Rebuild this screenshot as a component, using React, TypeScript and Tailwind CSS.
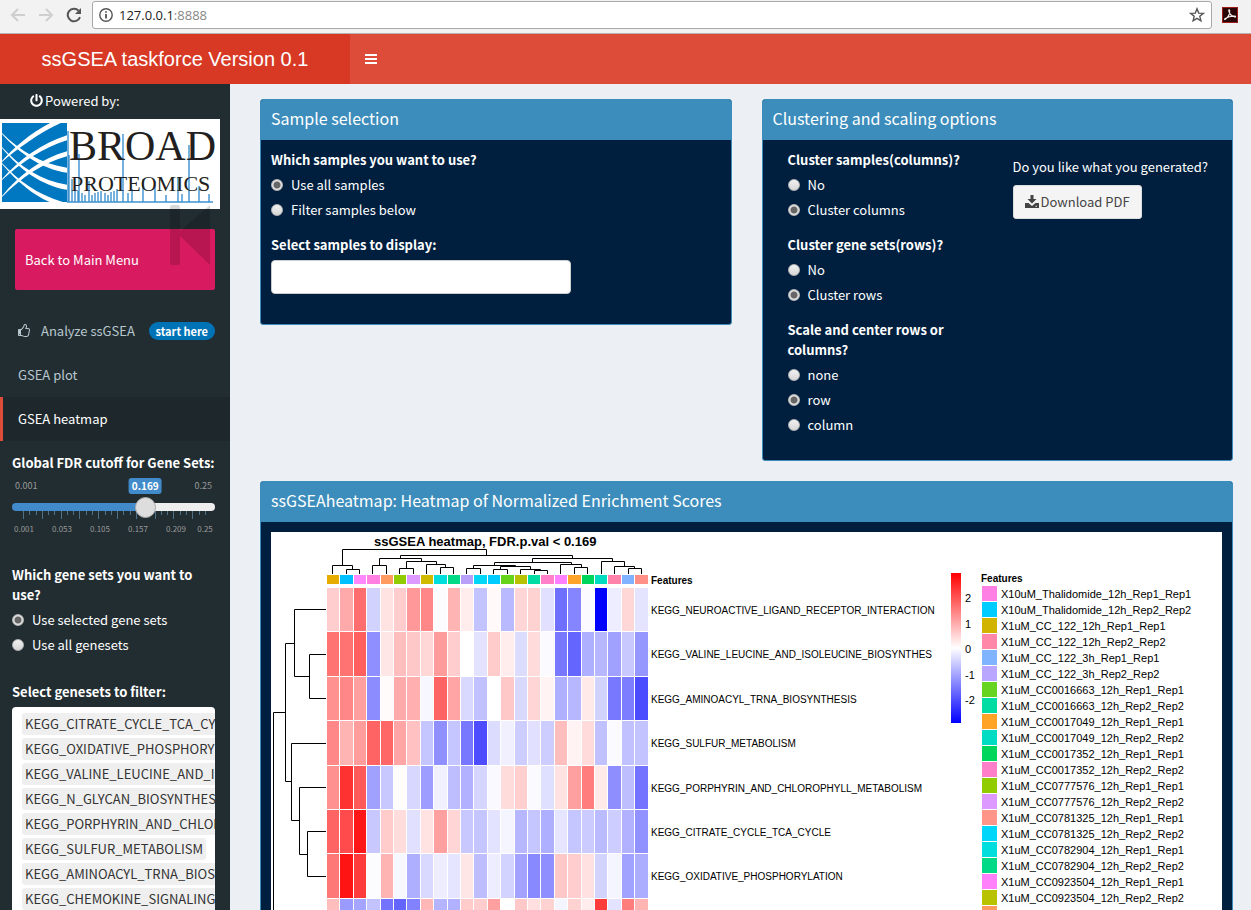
import React, { useState } from "react";
import { FaPowerOff } from "react-icons/fa";

const ROW_LABELS = [
  "KEGG_NEUROACTIVE_LIGAND_RECEPTOR_INTERACTION",
  "KEGG_VALINE_LEUCINE_AND_ISOLEUCINE_BIOSYNTHES",
  "KEGG_AMINOACYL_TRNA_BIOSYNTHESIS",
  "KEGG_SULFUR_METABOLISM",
  "KEGG_PORPHYRIN_AND_CHLOROPHYLL_METABOLISM",
  "KEGG_CITRATE_CYCLE_TCA_CYCLE",
  "KEGG_OXIDATIVE_PHOSPHORYLATION",
];

// Signed intensity per cell: positive is red, negative is blue, 255 is full colour.
const CELLS = [
  [50, 85, 145, -45, 28, 50, 102, 120, -3, 75, 18, -60, 6, -70, 42, 45, -30, -145, -122, -5, -255, -18, 40, -27],
  [140, 140, 160, -112, 25, 65, 55, 40, 100, 50, 0, -28, 52, 18, -35, 36, -4, -135, -155, -80, -72, -95, -55, -105],
  [110, 120, 95, -115, 4, 85, 80, -8, 155, 90, -38, -62, 0, 55, -38, 42, 12, -80, -72, 22, -45, -135, -130, -180],
  [120, 75, 98, 155, 152, 90, 62, -58, -112, -58, -135, -178, -35, -15, -50, -30, -50, 65, 12, 36, -62, -4, -62, -60],
  [110, 205, 165, -95, -55, 3, -40, -98, -15, -65, -78, -42, -6, 35, 48, -5, -32, 28, 95, 130, 22, -113, -65, -140],
  [155, 180, 232, -55, 52, 34, -30, 28, 95, 42, -55, -58, -28, -10, -72, -58, -80, -26, -58, -52, -68, -50, -78, -110],
  [135, 235, 195, -3, 75, -8, -80, -38, -18, -26, 25, -66, -18, -44, -92, -118, -112, 55, 50, 30, -44, -10, -94, -82],
  [65, -100, -90, -60, -140, -155, -125, 72, -75, -78, 52, 50, 95, 0, 55, 32, 45, -10, 45, 18, 195, -28, 130, 75],
];

const STRIP = [
  "#e6ad00", "#00c0ff", "#ff88fc", "#ff80e0", "#ff9a60", "#90cc00", "#dd99ff", "#d1bb00",
  "#00dddd", "#00d985", "#b8a0f8", "#00d6f5", "#00ccff", "#66d41a", "#b8c200", "#00dca4",
  "#ff80c8", "#ff80ff", "#ffa42a", "#00d65c", "#00dcc0", "#ff82aa", "#80b2ff", "#ff9088",
];

const LEGEND: [string, string][] = [
  ["X10uM_Thalidomide_12h_Rep1_Rep1", "#ff80e4"],
  ["X10uM_Thalidomide_12h_Rep2_Rep2", "#00ccff"],
  ["X1uM_CC_122_12h_Rep1_Rep1", "#d1b400"],
  ["X1uM_CC_122_12h_Rep2_Rep2", "#ff88a8"],
  ["X1uM_CC_122_3h_Rep1_Rep1", "#80b4ff"],
  ["X1uM_CC_122_3h_Rep2_Rep2", "#b8a6ff"],
  ["X1uM_CC0016663_12h_Rep1_Rep1", "#66d420"],
  ["X1uM_CC0016663_12h_Rep2_Rep2", "#00dca4"],
  ["X1uM_CC0017049_12h_Rep1_Rep1", "#ffa426"],
  ["X1uM_CC0017049_12h_Rep2_Rep2", "#00dcc4"],
  ["X1uM_CC0017352_12h_Rep1_Rep1", "#00d65c"],
  ["X1uM_CC0017352_12h_Rep2_Rep2", "#ff80c8"],
  ["X1uM_CC0777576_12h_Rep1_Rep1", "#90cc00"],
  ["X1uM_CC0777576_12h_Rep2_Rep2", "#dd99ff"],
  ["X1uM_CC0781325_12h_Rep1_Rep1", "#ff9488"],
  ["X1uM_CC0781325_12h_Rep2_Rep2", "#00d6fa"],
  ["X1uM_CC0782904_12h_Rep1_Rep1", "#00dddd"],
  ["X1uM_CC0782904_12h_Rep2_Rep2", "#00d985"],
  ["X1uM_CC0923504_12h_Rep1_Rep1", "#ff80fa"],
  ["X1uM_CC0923504_12h_Rep2_Rep2", "#b8c200"],
  ["X1uM_CC0965056_12h_Rep1_Rep1", "#ff9a60"],
];

const GENE_SETS = [
  "KEGG_CITRATE_CYCLE_TCA_CYCLE",
  "KEGG_OXIDATIVE_PHOSPHORYLATION",
  "KEGG_VALINE_LEUCINE_AND_ISOLEUCINE",
  "KEGG_N_GLYCAN_BIOSYNTHESIS",
  "KEGG_PORPHYRIN_AND_CHLOROPHYLL",
  "KEGG_SULFUR_METABOLISM",
  "KEGG_AMINOACYL_TRNA_BIOSYNTHESIS",
  "KEGG_CHEMOKINE_SIGNALING_PATHWAY",
  "KEGG_NEUROACTIVE_LIGAND_RECEPTOR",
];

const COLUMN_TREE = [
  "M342.5 565.5V549.5H486.5V555.5",
  "M332.5 574V565.5H352.5V569.5",
  "M346.5 574V569.5H359.5V574",
  "M400.5 558.5V555.5H572.5V558.5",
  "M379.5 565.5V558.5H421.5V561.5",
  "M372.5 574V565.5H386.5V574",
  "M406.5 568.5V561.5H436.5V564.5",
  "M399.5 574V568.5H413.5V574",
  "M426.5 574V564.5H445.5V567.5",
  "M440.5 574V567.5H453.5V574",
  "M532.5 562.5V558.5H612.5V561.5",
  "M494.5 565.5V562.5H571.5V564.5",
  "M473.5 568.5V565.5H515.5V566.5",
  "M466.5 574V568.5H480.5V574",
  "M500.5 569.5V566.5H530.5V569.5",
  "M493.5 574V569.5H507.5V574",
  "M520.5 574V569.5H540.5V570.5",
  "M534.5 574V570.5H547.5V574",
  "M560.5 574V564.5H581.5V567.5",
  "M574.5 574V567.5H587.5V574",
  "M601.5 574V561.5H624.5V566.5",
  "M614.5 574V566.5H634.5V568.5",
  "M628.5 574V568.5H641.5V574",
].join("");

const ROW_TREE = [
  "M326 654.5H309.5V698.5H326",
  "M326 609.5H294.5V676.5H309.5",
  "M294.5 643.5H285.5V781.5H291.5",
  "M285.5 712.5H273.5V1000",
  "M326 743.5H291.5V820.5H299.5",
  "M326 787.5H299.5V854.5H307.5",
  "M326 831.5H307.5V876.5H326",
].join("");

function cellColor(v: number) {
  const fade = 255 - Math.abs(v);
  return v >= 0 ? `rgb(255,${fade},${fade})` : `rgb(${fade},${fade},255)`;
}

const colX = (i: number) => Math.round(327 + i * 13.4);
const rowY = (i: number) => Math.round(588 + i * 44.4);

function Heatmap() {
  return (
    <svg
      viewBox="271 532 951 620"
      preserveAspectRatio="xMinYMin meet"
      className="block h-[620px] w-full font-['Liberation_Sans',Arial,sans-serif]"
      role="img"
      aria-label="ssGSEA heatmap"
    >
      <defs>
        <linearGradient id="scale" x1="0" y1="0" x2="0" y2="1">
          <stop offset="0" stopColor="#ff0000" />
          <stop offset="0.5" stopColor="#ffffff" />
          <stop offset="1" stopColor="#0000ff" />
        </linearGradient>
      </defs>
      <text x="374" y="546" fontSize="13" fontWeight="700">
        ssGSEA heatmap, FDR.p.val &lt; 0.169
      </text>
      <path d={COLUMN_TREE + ROW_TREE} fill="none" stroke="#000" strokeWidth="1" />
      <g shapeRendering="crispEdges">
        {STRIP.map((c, i) => (
          <rect key={i} x={colX(i)} y="575" width={colX(i + 1) - colX(i) - 1} height="9" fill={c} />
        ))}
        {CELLS.map((row, r) =>
          row.map((v, i) => (
            <rect
              key={`${r}-${i}`}
              x={colX(i)}
              y={rowY(r)}
              width={colX(i + 1) - colX(i) - 1}
              height={rowY(r + 1) - rowY(r) - 1}
              fill={cellColor(v)}
            />
          )),
        )}
        <rect x="951" y="573" width="10" height="150" fill="url(#scale)" />
        {LEGEND.map(([, c], i) => (
          <rect key={i} x="982" y={586 + i * 16} width="15" height="15" fill={c} />
        ))}
      </g>
      <g fontSize="10">
        {ROW_LABELS.map((t, i) => (
          <text key={t} x="651" y={Math.round(614 + i * 44.4)}>
            {t}
          </text>
        ))}
      </g>
      <g fontSize="11">
        {["2", "1", "0", "-1", "-2"].map((t, i) => (
          <text key={t} x="965" y={Math.round(602 + i * 25.5)}>
            {t}
          </text>
        ))}
        {LEGEND.map(([t], i) => (
          <text key={t} x="1001" y={598 + i * 16}>
            {t}
          </text>
        ))}
      </g>
      <g fontSize="10" fontWeight="700">
        <text x="651" y="584">Features</text>
        <text x="981" y="582">Features</text>
      </g>
    </svg>
  );
}

function BroadLogo() {
  const peaks = [
    [69, 36], [72, 60], [75, 68], [78, 72], [79, 35], [82, 74], [85, 76], [89, 62], [92, 76], [95, 74], [98, 73],
    [101, 72], [105, 74], [108, 76], [111, 73], [114, 72], [117, 70], [123, 15], [128, 74], [132, 70], [143, 60],
    [155, 62], [166, 76], [178, 58], [182, 75], [189, 26], [199, 67], [209, 75],
  ];
  return (
    <svg viewBox="0 0 220 90" className="block h-[90px] w-[220px] bg-white" role="img" aria-label="Broad Proteomics">
      <defs>
        <clipPath id="square">
          <rect x="2" y="4" width="65" height="79" />
        </clipPath>
      </defs>
      <rect x="2" y="4" width="65" height="79" fill="#0078c1" />
      <g clipPath="url(#square)" fill="#fff">
        <path d="M2 42C14 28 32 13 52 3H63C42 12 18 29 2 43Z" />
        <path d="M2 60C20 40 42 24 68 16V21C44 28 22 43 2 61Z" />
        <path d="M2 77C20 55 42 39 68 32V37C44 43 22 58 2 78Z" />
        <path d="M2 14C20 32 42 45 68 49V54C42 50 20 35 2 15Z" />
        <path d="M2 28C20 48 42 62 68 66V71C42 67 20 51 2 29Z" />
        <path d="M2 44C20 63 38 76 66 84H52C36 78 18 64 2 45Z" />
      </g>
      <path
        d={"M67 83H213" + peaks.map(([x, y]) => `M${x} 83V${y}`).join("") + "M68 83V12"}
        stroke="#3d92cf"
        strokeWidth="1.4"
        fill="none"
      />
      <g fill="#231f20" className="font-['Liberation_Serif','Times_New_Roman',serif]">
        <text x="69" y="41" fontSize="42">BROAD</text>
        <text x="71" y="72" fontSize="22">PROTEOMICS</text>
      </g>
    </svg>
  );
}

function Radio({ name, label, checked = false }: { name: string; label: string; checked?: boolean }) {
  return (
    <label className="flex h-5 items-center gap-2">
      <input
        type="radio"
        name={name}
        defaultChecked={checked}
        className="size-3 appearance-none rounded-full border border-[#b5b5b5] bg-linear-to-b from-[#f2f2f2] to-[#d6d6d6] checked:bg-[radial-gradient(circle,#666_0_3px,#e2e2e2_4px)]"
      />
      <span>{label}</span>
    </label>
  );
}

type Option = { label: string; checked?: boolean };

function RadioGroup({ name, legend, options }: { name: string; legend: string; options: Option[] }) {
  return (
    <fieldset>
      <legend className="mb-[5px] font-bold">{legend}</legend>
      <div className="flex flex-col gap-[5px]">
        {options.map((o) => (
          <Radio key={o.label} name={name} label={o.label} checked={o.checked} />
        ))}
      </div>
    </fieldset>
  );
}

function Card({ title, className, children }: { title: string; className: string; children: React.ReactNode }) {
  return (
    <section className={`overflow-hidden rounded-[3px] border border-[#3c8dbc] bg-[#001f3f] text-white ${className}`}>
      <h3 className="flex h-10 items-center bg-[#3c8dbc] px-[10px] pb-1 text-base leading-5">{title}</h3>
      {children}
    </section>
  );
}

function FdrSlider() {
  const [value, setValue] = useState(0.169);
  const pct = ((value - 0.001) / 0.249) * 100;
  const ticks = Array.from({ length: 30 }, (_, i) => i);
  return (
    <div className="flex flex-col">
      <label htmlFor="fdr" className="font-bold">
        Global FDR cutoff for Gene Sets:
      </label>
      <div className="mt-[5px] flex h-4 items-center justify-between px-[3px] text-[9px] text-[#999]">
        <span>0.001</span>
        <span>0.25</span>
      </div>
      <div className="relative -mt-4 h-4">
        <output
          htmlFor="fdr"
          className="absolute -translate-x-1/2 rounded-[3px] bg-[#428bca] px-[3px] text-[10px] leading-4 font-bold text-white"
          style={{ left: `calc(${pct}% + ${10.5 - pct * 0.21}px)` }}
        >
          {value}
        </output>
      </div>
      <input
        id="fdr"
        type="range"
        min={0.001}
        max={0.25}
        step={0.001}
        value={value}
        onChange={(e) => setValue(Number(e.target.value))}
        className="relative z-10 mt-[9px] h-2 w-full appearance-none rounded [&::-webkit-slider-thumb]:size-[21px] [&::-webkit-slider-thumb]:appearance-none [&::-webkit-slider-thumb]:rounded-full [&::-webkit-slider-thumb]:border [&::-webkit-slider-thumb]:border-[#aaa] [&::-webkit-slider-thumb]:bg-[#ddd]"
        style={{ background: `linear-gradient(to right, #428bca ${pct}%, #eee ${pct}%)` }}
      />
      <svg viewBox="0 0 203 26" className="h-[26px] w-full" aria-hidden="true">
        <path
          d={ticks.map((i) => `M${11.5 + Math.round(i * 6.27)} 0V${i % 3 === 0 ? 8 : 4}`).join("")}
          stroke="#4f7187"
          strokeWidth="1"
        />
        <g fill="#999" fontSize="8" textAnchor="middle">
          <text x="12" y="21">0.001</text>
          <text x="50" y="21">0.053</text>
          <text x="88" y="21">0.105</text>
          <text x="126" y="21">0.157</text>
          <text x="164" y="21">0.209</text>
          <text x="193" y="21">0.25</text>
        </g>
      </svg>
    </div>
  );
}

function BrowserBar() {
  return (
    <div className="flex h-[34px] shrink-0 items-start border-b border-[#b5b2b1] bg-[#f2f2f2] pt-px">
      <div className="flex h-7 items-center gap-3 px-[10px]">
        <button aria-label="Back">
          <svg viewBox="0 0 16 16" className="block size-4" fill="none" stroke="#cfcfcf" strokeWidth="2">
            <path d="M15 8H2M8 2L2 8l6 6" />
          </svg>
        </button>
        <button aria-label="Forward">
          <svg viewBox="0 0 16 16" className="block size-4" fill="none" stroke="#cfcfcf" strokeWidth="2">
            <path d="M1 8h13M8 2l6 6-6 6" />
          </svg>
        </button>
        <button aria-label="Reload">
          <svg viewBox="0 0 16 16" className="block size-4" fill="none" stroke="#555" strokeWidth="2">
            <path d="M14 10.2A6.3 6.3 0 1 1 12.6 3.6" />
            <path d="M15 1v6H9Z" fill="#555" stroke="none" />
          </svg>
        </button>
      </div>
      <div className="flex h-7 flex-1 items-center gap-[6px] rounded-[3px] border border-[#a9a9a9] bg-white px-[6px]">
        <svg viewBox="0 0 14 14" className="size-[14px]" fill="none" stroke="#555">
          <circle cx="7" cy="7" r="6.2" strokeWidth="1.4" />
          <path d="M7 6v4.6M7 3.2v1.6" strokeWidth="1.8" />
        </svg>
        <span className="flex-1 font-['Open_Sans',sans-serif] text-[13px] leading-5 text-[#222]">
          127.0.0.1<span className="text-[#888]">:8888</span>
        </span>
        <button aria-label="Bookmark">
          <svg viewBox="0 0 16 16" className="block size-4" fill="none" stroke="#555" strokeWidth="1.4">
            <path d="M8 1.8l1.7 4.3 4.6.3-3.5 2.9 1.1 4.5L8 11.3l-3.9 2.5 1.1-4.5L1.700 6.400l4.600-.3Z" />
          </svg>
        </button>
      </div>
      <div className="flex h-7 items-center pr-[13px] pl-[10px]">
        <button aria-label="Adobe Acrobat">
          <svg viewBox="0 0 16 16" className="block size-4">
            <rect width="16" height="16" fill="#a01a1a" />
            <rect x="1" y="1" width="14" height="14" fill="#2b0606" />
            <path
              d="M3 12.5C6 10.5 8 7 7.6 3.4c-.1-.9-1-.6-.8.3.5 3 2.8 5.5 6 6.3 1 .2 1-.8 0-.9-3.6-.3-6.8.7-9.6 2.5-.7.5-.8 1-.2.9Z"
              fill="none"
              stroke="#f2eeee"
              strokeWidth="1.2"
            />
          </svg>
        </button>
      </div>
    </div>
  );
}

function ThumbsUp() {
  return (
    <svg viewBox="0 0 1792 1792" className="size-[14px]" fill="currentColor" aria-hidden="true">
      <path d="M384 1344q0-26-19-45t-45-19-45 19-19 45 19 45 45 19 45-19 19-45zm1152-576q0-51-39-89.5t-89-38.5h-352q0-58 48-159.5t48-160.5q0-98-32-145t-128-47q-26 26-38 85t-30.5 125.5-59.5 109.5q-22 23-77 91-4 5-23 30t-31.5 41-34.5 42.5-40 44-38.5 35.5-40 27-35.5 9h-32v640h32q13 0 31.5 3t33 6.5 38 11 35 11.5 35.5 12.5 29 10.5q211 73 342 73h121q192 0 192-167 0-26-5-56 30-16 47.5-52.5t17.5-73.5-18-69q53-50 53-119 0-25-10-55.5t-25-47.5q32-1 53.5-47t21.5-81zm128-1q0 89-49 163 9 33 9 69 0 77-38 144 3 21 3 43 0 101-60 178 1 139-85 219.5t-227 80.5h-129q-96 0-189.5-22.5t-216.5-65.5q-116-40-138-40h-288q-53 0-90.5-37.5t-37.5-90.5v-640q0-53 37.5-90.5t90.5-37.5h274q36-24 137-155 58-75 107-128 24-25 35.5-85.5t30.5-126.5 62-108q39-37 90-37 84 0 151 32.5t102 101.5 35 186q0 93-48 192h176q104 0 180 76t76 179z" />
    </svg>
  );
}

function Sidebar() {
  return (
    <aside className="w-[230px] shrink-0 bg-[#222d32] text-white">
      <p className="flex h-[35px] items-center gap-[2px] pb-[2px] pl-[30px]">
        <FaPowerOff className="size-[13px]" />
        Powered by:
      </p>
      <BroadLogo />
      <div className="relative mt-5 px-[15px]">
        <a
          href="#main-menu"
          className="flex h-[61px] items-center rounded-[2px] bg-[#d81b60] px-[10px]"
        >
          Back to Main Menu
        </a>
        <svg viewBox="0 0 40 60" className="absolute -top-6 right-[20px] h-[60px] w-10" fill="#000" fillOpacity="0.15">
          <path d="M0 2q0-2 2-2h6q2 0 2 2v24L40 0v60L10 31v27q0 2-2 2H2q-2 0-2-2Z" />
        </svg>
      </div>
      <nav className="mt-[19px] flex flex-col text-[#b8c7ce]">
        <a href="#analyze" className="flex h-11 items-center pr-[15px] pl-[17px]">
          <ThumbsUp />
          <span className="ml-[10px] flex-1">Analyze ssGSEA</span>
          <span className="rounded-full bg-[#0073b7] px-[7px] text-[11px] leading-[18px] font-bold text-white">
            start here
          </span>
        </a>
        <a href="#plot" className="flex h-11 items-center pl-[18px]">
          GSEA plot
        </a>
        <a
          href="#heatmap"
          className="flex h-11 items-center border-l-[3px] border-[#dd4b39] bg-[#1e282c] pl-[15px] text-white"
        >
          GSEA heatmap
        </a>
      </nav>
      <div className="mt-3 pr-[15px] pl-3">
        <FdrSlider />
        <div className="mt-[28px]">
          <RadioGroup
            name="genesets"
            legend="Which gene sets you want to use?"
            options={[{ label: "Use selected gene sets", checked: true }, { label: "Use all genesets" }]}
          />
        </div>
        <h4 className="mt-[27px] mb-[5px] font-bold">Select genesets to filter:</h4>
        <ul className="flex flex-col items-start gap-[3px] overflow-hidden rounded-[4px] bg-white py-[6px] pl-[10px] whitespace-nowrap text-[#333]">
          {GENE_SETS.map((g) => (
            <li key={g} className="rounded-[3px] bg-[#efefef] px-[3px] leading-[22px]">
              {g}
            </li>
          ))}
        </ul>
      </div>
    </aside>
  );
}

export default function App() {
  return (
    <div className="flex h-screen flex-col overflow-hidden bg-[#ecf0f5] font-['Noto_Sans_CJK_SC',sans-serif] text-[13px] leading-5">
      <BrowserBar />
      <header className="flex h-[50px] shrink-0 bg-[#dd4b39] font-['Liberation_Sans',Arial,sans-serif] text-white">
        <h1 className="flex w-[350px] items-center justify-center bg-[#d73925] text-xl">ssGSEA taskforce Version 0.1</h1>
        <button aria-label="Toggle navigation" className="px-[15px]">
          <svg viewBox="0 0 12 10" className="block h-[10px] w-3" fill="currentColor" aria-hidden="true">
            <path d="M0 0h12v2H0ZM0 4h12v2H0ZM0 8h12v2H0Z" />
          </svg>
        </button>
      </header>
      <div className="flex min-h-0 flex-1">
        <Sidebar />
        <main className="min-w-0 flex-1 pt-[15px] pr-[18px] pl-[30px]">
          <div className="grid grid-cols-2 items-start gap-[30px]">
            <Card title="Sample selection" className="pb-[30px]">
              <div className="flex flex-col gap-[15px] px-[10px] pt-[10px]">
                <RadioGroup
                  name="samples"
                  legend="Which samples you want to use?"
                  options={[{ label: "Use all samples", checked: true }, { label: "Filter samples below" }]}
                />
                <div className="flex flex-col gap-[5px]">
                  <label htmlFor="display" className="font-bold">
                    Select samples to display:
                  </label>
                  <input
                    id="display"
                    type="text"
                    className="h-[34px] w-[300px] rounded-[4px] border border-[#ccc] bg-white px-3 text-[#333]"
                  />
                </div>
              </div>
            </Card>
            <Card title="Clustering and scaling options" className="pb-[25px]">
              <div className="flex pt-[10px] pl-[25px]">
                <div className="flex w-[195px] flex-col gap-[15px]">
                  <RadioGroup
                    name="columns"
                    legend="Cluster samples(columns)?"
                    options={[{ label: "No" }, { label: "Cluster columns", checked: true }]}
                  />
                  <RadioGroup
                    name="rows"
                    legend="Cluster gene sets(rows)?"
                    options={[{ label: "No" }, { label: "Cluster rows", checked: true }]}
                  />
                  <RadioGroup
                    name="scale"
                    legend="Scale and center rows or columns?"
                    options={[{ label: "none" }, { label: "row", checked: true }, { label: "column" }]}
                  />
                </div>
                <div className="flex flex-col items-start gap-2 pt-[7px] pl-[30px]">
                  <p>Do you like what you generated?</p>
                  <button className="flex h-[34px] items-center gap-[2px] rounded-[3px] border border-[#ddd] bg-[#f4f4f4] px-[11px] text-[#444]">
                    <svg viewBox="0 0 14 14" className="size-[14px]" fill="currentColor" aria-hidden="true">
                      <path d="M5.5 0h3v4h3L7 8.5 2.5 4h3Z" />
                      <path d="M0 8h3.500L7 11l3.500-3H14v5H0ZM10.500 10.800v1h1.500v-1Z" fillRule="evenodd" />
                    </svg>
                    Download PDF
                  </button>
                </div>
              </div>
            </Card>
          </div>
          <Card title="ssGSEAheatmap: Heatmap of Normalized Enrichment Scores" className="mt-5 p-0">
            <div className="p-[10px]">
              <div className="bg-white">
                <Heatmap />
              </div>
            </div>
          </Card>
        </main>
      </div>
    </div>
  );
}
